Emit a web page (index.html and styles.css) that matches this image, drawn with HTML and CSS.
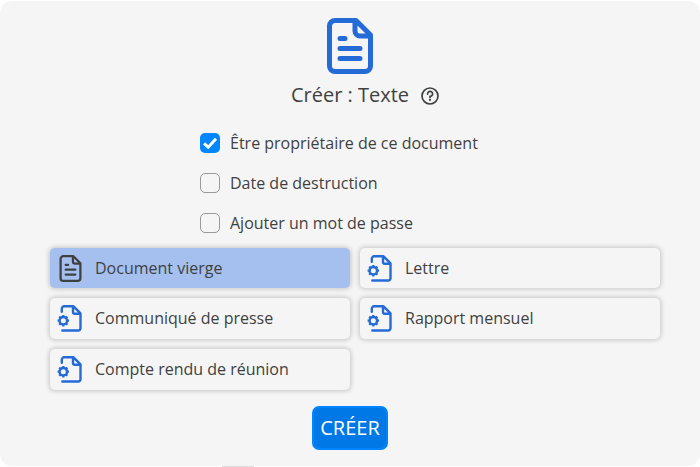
FILE: index.html
```html
<!DOCTYPE html>
<html lang="fr">
<head>
<meta charset="utf-8">
<title>Créer : Texte</title>
<link rel="stylesheet" href="styles.css">
</head>
<body>
<svg class="defs" aria-hidden="true">
  <symbol id="doc" viewBox="0 0 46 56">
    <path d="M29 2.500H8A5.500 5.500 0 0 0 2.500 8V48A5.500 5.500 0 0 0 8 53.500H38A5.500 5.500 0 0 0 43.500 48V17ZM28 2.500V13A5 5 0 0 0 33 18H43.500M13 20.500H18M13 30.500H33M13 40.500H33"/>
  </symbol>
  <symbol id="template" viewBox="0 0 26 28">
    <path d="M4.800 7.800V4.600A2.300 2.300 0 0 1 7.100 2.300H16.500L23.500 9.300V24.200A2.300 2.300 0 0 1 21.200 26.500H5.300M16 2.300V8A1.800 1.800 0 0 0 17.800 9.800H23.500"/>
    <circle class="gear" cx="6.300" cy="16.700" r="3.700"/>
    <path class="teeth" d="M6.300 12.500V11M6.300 20.900V22.400M2.100 16.700H.6M10.500 16.700H12M3.400 13.800L2.200 12.600M9.200 13.800L10.400 12.600M3.400 19.600L2.200 20.800M9.200 19.600L10.400 20.800"/>
  </symbol>
</svg>
<main class="panel">
  <svg class="hero-icon"><use href="#doc"/></svg>
  <h1 class="title">Créer : Texte
    <svg class="help" viewBox="0 0 18 18"><circle cx="9" cy="9" r="8"/><path d="M6.600 7.100A2.500 2.500 0 1 1 9 9.400V10.500"/><circle class="dot" cx="9" cy="12.900" r="1.050"/></svg>
  </h1>
  <div class="options">
    <label class="option"><span class="box checked"><svg viewBox="0 0 20 20"><path d="M4.100 10.300L8.200 14.200L16 5.800"/></svg></span>Être propriétaire de ce document</label>
    <label class="option"><span class="box"></span>Date de destruction</label>
    <label class="option"><span class="box"></span>Ajouter un mot de passe</label>
  </div>
  <div class="templates">
    <div class="card selected"><svg class="icon blank"><use href="#doc"/></svg>Document vierge</div>
    <div class="card"><svg class="icon"><use href="#template"/></svg>Lettre</div>
    <div class="card tall"><svg class="icon"><use href="#template"/></svg>Communiqué de presse</div>
    <div class="card tall"><svg class="icon"><use href="#template"/></svg>Rapport mensuel</div>
    <div class="card tall"><svg class="icon"><use href="#template"/></svg>Compte rendu de réunion</div>
  </div>
  <button class="create">CRÉER</button>
</main>
<div class="handle"></div>
</body>
</html>
```
FILE: styles.css
```css
* { box-sizing: border-box; }

body {
  margin: 0;
  height: 467px;
  padding-top: 1px;
  overflow: hidden;
  background: #fff;
  color: #3f4141;
  font: 16px/20px "Open Sans", "Noto Sans", sans-serif;
}

.defs { display: block; width: 0; height: 0; }

.panel {
  display: flex;
  flex-direction: column;
  align-items: center;
  height: 465px;
  padding-top: 17px;
  border-radius: 12px;
  background: #f5f5f5;
}

svg { fill: none; stroke-linecap: round; stroke-linejoin: round; }

.hero-icon {
  width: 46px;
  height: 56px;
  stroke: #256bd8;
  stroke-width: 5;
}

.title {
  display: flex;
  align-items: center;
  gap: 11.5px;
  height: 28px;
  margin: 7px 0 0 29.5px;
  font-size: 20px;
  font-weight: 400;
}

.help {
  width: 18px;
  height: 18px;
  margin-top: 1px;
  stroke: #3f4141;
  stroke-width: 1.7;
}

.help .dot { fill: #3f4141; stroke: none; }

.options {
  display: flex;
  flex-direction: column;
  gap: 20px;
  width: 300px;
  margin-top: 24px;
}

.option {
  display: flex;
  align-items: center;
  gap: 10px;
  height: 20px;
  white-space: nowrap;
}

.box {
  width: 20px;
  height: 20px;
  border: 1px solid #999;
  border-radius: 5px;
}

.box.checked { border: 0; background: #0087ff; }

.box svg {
  display: block;
  stroke: #fff;
  stroke-width: 3;
  stroke-linecap: butt;
  stroke-linejoin: miter;
}

.templates {
  display: grid;
  grid-template-columns: 300px 300px;
  grid-template-rows: 40px 41px 41px;
  gap: 10px;
  margin: 15px 0 0 10px;
}

.card {
  display: flex;
  align-items: center;
  padding-left: 7px;
  border-radius: 5px;
  background: #f5f5f5;
  box-shadow: 0 0 5px 1px rgba(0, 0, 0, .2);
}

.card.tall { padding-bottom: 1px; }

.card.selected { background: #a5c0ef; }

.icon {
  width: 26px;
  height: 28px;
  margin-right: 12px;
  stroke: #256bd8;
  stroke-width: 2.4;
}

.icon.blank {
  width: 23px;
  height: 27px;
  margin: 0 13px 0 2px;
  stroke: #3f4141;
  stroke-width: 4.7;
}

.gear { stroke-width: 2.4; }

.teeth { stroke-width: 2.2; stroke-linecap: butt; }

.create {
  width: 76px;
  height: 44px;
  margin-top: 16px;
  padding: 0;
  border: 2px solid #0087ff;
  border-radius: 7px;
  background: #0078e5;
  color: #fff;
  font: 20px/38px "Open Sans", "Noto Sans", sans-serif;
}

.handle {
  width: 32px;
  height: 1px;
  margin-left: 222px;
  background: #ddd;
}
```
